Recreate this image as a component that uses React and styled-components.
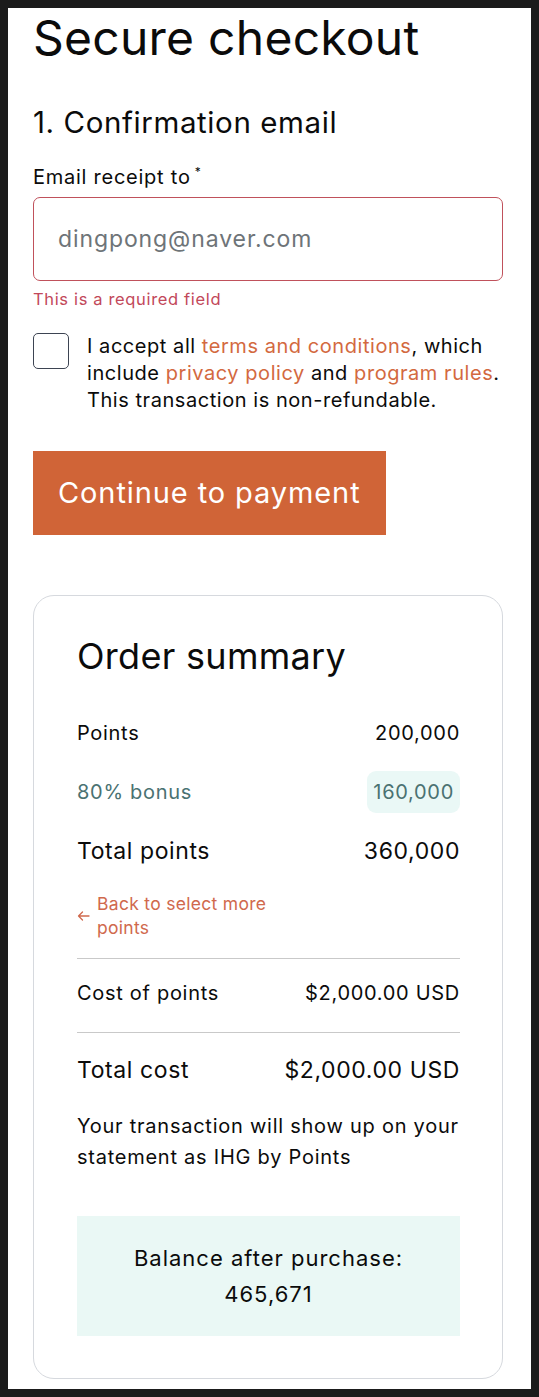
import React from "react";
import styled, { createGlobalStyle } from "styled-components";

const Global = createGlobalStyle`
  html, body { margin: 0; padding: 0; }
  body {
    background: #1b1b1b;
    font-family: Inter, "Noto Sans", Arial, sans-serif;
    color: #0b0b0b;
    letter-spacing: 0.7px;
  }
  * { box-sizing: border-box; }
`;

const Frame = styled.div`
  padding: 8px;
`;

const Page = styled.main`
  background: #ffffff;
  padding: 2px 28px 10px 25px;
`;

const Title = styled.h1`
  margin: 0;
  font-size: 48px;
  font-weight: 400;
  line-height: 56px;
  letter-spacing: 0.25px;
`;

const SectionTitle = styled.h2`
  margin: 38px 0 0;
  font-size: 29.5px;
  font-weight: 400;
  line-height: 36px;
  letter-spacing: 0.6px;
`;

const Label = styled.label`
  display: block;
  margin-top: 20px;
  font-size: 20px;
  line-height: 24px;
  letter-spacing: 0.75px;
  sup { font-size: 12px; margin-left: 4px; }
`;

const Input = styled.input`
  display: block;
  width: 100%;
  height: 84px;
  margin-top: 8px;
  padding: 0 24px;
  border: 1px solid #c0515b;
  border-radius: 7px;
  font-family: inherit;
  font-size: 23px;
  letter-spacing: 0.9px;
  color: #222;
  outline: none;
  &::placeholder { color: #6e7478; }
`;

const ErrorText = styled.div`
  margin-top: 8px;
  font-size: 16.5px;
  line-height: 20px;
  letter-spacing: 0.65px;
  color: #c2485a;
`;

const Terms = styled.div`
  display: flex;
  gap: 18px;
  margin-top: 24px;
`;

const Checkbox = styled.span`
  flex: 0 0 36px;
  width: 36px;
  height: 36px;
  border: 1.5px solid #3d4452;
  border-radius: 5px;
`;

const TermsText = styled.p`
  margin: 0;
  font-size: 20px;
  line-height: 27px;
  letter-spacing: 0.55px;
  white-space: nowrap;
`;

const Link = styled.a`
  color: #d3693f;
  text-decoration: none;
`;

const Button = styled.button`
  display: block;
  margin-top: 37px;
  height: 84px;
  padding: 0 25px;
  background: #d06437;
  color: #fff;
  border: none;
  font-family: inherit;
  font-size: 29px;
  letter-spacing: 0.9px;
  font-weight: 400;
`;

const Card = styled.section`
  margin-top: 60px;
  border: 1px solid #d6d9de;
  border-radius: 21px;
  padding: 38px 42px 42px 43px;
`;

const CardTitle = styled.h2`
  margin: 0;
  font-size: 36px;
  font-weight: 400;
  line-height: 44px;
  letter-spacing: 0.3px;
`;

const Row = styled.div`
  display: flex;
  justify-content: space-between;
  align-items: center;
  margin-top: ${(p) => p.$mt || 0}px;
  font-size: ${(p) => (p.$big ? 23 : 20)}px;
  line-height: ${(p) => (p.$big ? 30 : 26)}px;
  letter-spacing: ${(p) => (p.$big ? 0.6 : 0.7)}px;
  color: ${(p) => p.$color || "#0b0b0b"};
`;

const Pill = styled.span`
  background: #eaf8f6;
  border-radius: 9px;
  padding: 8px 6px;
`;

const Back = styled.a`
  display: flex;
  align-items: center;
  gap: 7px;
  margin-top: 26px;
  width: 200px;
  color: #d0694d;
  font-size: 17.5px;
  line-height: 24px;
  letter-spacing: 0.3px;
  text-decoration: none;
  svg { flex: 0 0 auto; }
`;

const Divider = styled.hr`
  margin: ${(p) => p.$mt || 0}px 0 0;
  border: none;
  border-top: 1px solid #c9c9c9;
`;

const Note = styled.p`
  margin: 26px 0 0;
  font-size: 20px;
  line-height: 31px;
  letter-spacing: 0.75px;
`;

const Balance = styled.div`
  margin-top: 43px;
  background: #eaf8f5;
  padding: 24px 10px;
  text-align: center;
  font-size: 22px;
  line-height: 36px;
  letter-spacing: 1px;
`;

export default function App() {
  return (
    <Frame>
      <Global />
      <Page>
        <Title>Secure checkout</Title>
        <SectionTitle>1. Confirmation email</SectionTitle>
        <Label htmlFor="email">
          Email receipt to<sup>*</sup>
        </Label>
        <Input id="email" placeholder="dingpong@naver.com" />
        <ErrorText>This is a required field</ErrorText>
        <Terms>
          <Checkbox />
          <TermsText>
            I accept all <Link href="#">terms and conditions</Link>, which
            <br />
            include <Link href="#">privacy policy</Link> and{" "}
            <Link href="#">program rules</Link>.
            <br />
            This transaction is non-refundable.
          </TermsText>
        </Terms>
        <Button>Continue to payment</Button>
        <Card>
          <CardTitle>Order summary</CardTitle>
          <Row $mt={42}>
            <span>Points</span>
            <span>200,000</span>
          </Row>
          <Row $mt={25} $color="#4a7272">
            <span>80% bonus</span>
            <Pill>160,000</Pill>
          </Row>
          <Row $mt={23} $big>
            <span>Total points</span>
            <span>360,000</span>
          </Row>
          <Back href="#">
            <svg width="13" height="10" viewBox="0 0 13 10" fill="none" stroke="currentColor" strokeWidth="1.3" strokeLinecap="round" strokeLinejoin="round">
              <path d="M12 5H1.5M5.5 1L1.5 5l4 4" />
            </svg>
            <span>Back to select more points</span>
          </Back>
          <Divider $mt={18} />
          <Row $mt={21}>
            <span>Cost of points</span>
            <span>$2,000.00 USD</span>
          </Row>
          <Divider $mt={26} />
          <Row $mt={22} $big>
            <span>Total cost</span>
            <span>$2,000.00 USD</span>
          </Row>
          <Note>Your transaction will show up on your statement as IHG by Points</Note>
          <Balance>
            Balance after purchase:
            <br />
            465,671
          </Balance>
        </Card>
      </Page>
    </Frame>
  );
}
